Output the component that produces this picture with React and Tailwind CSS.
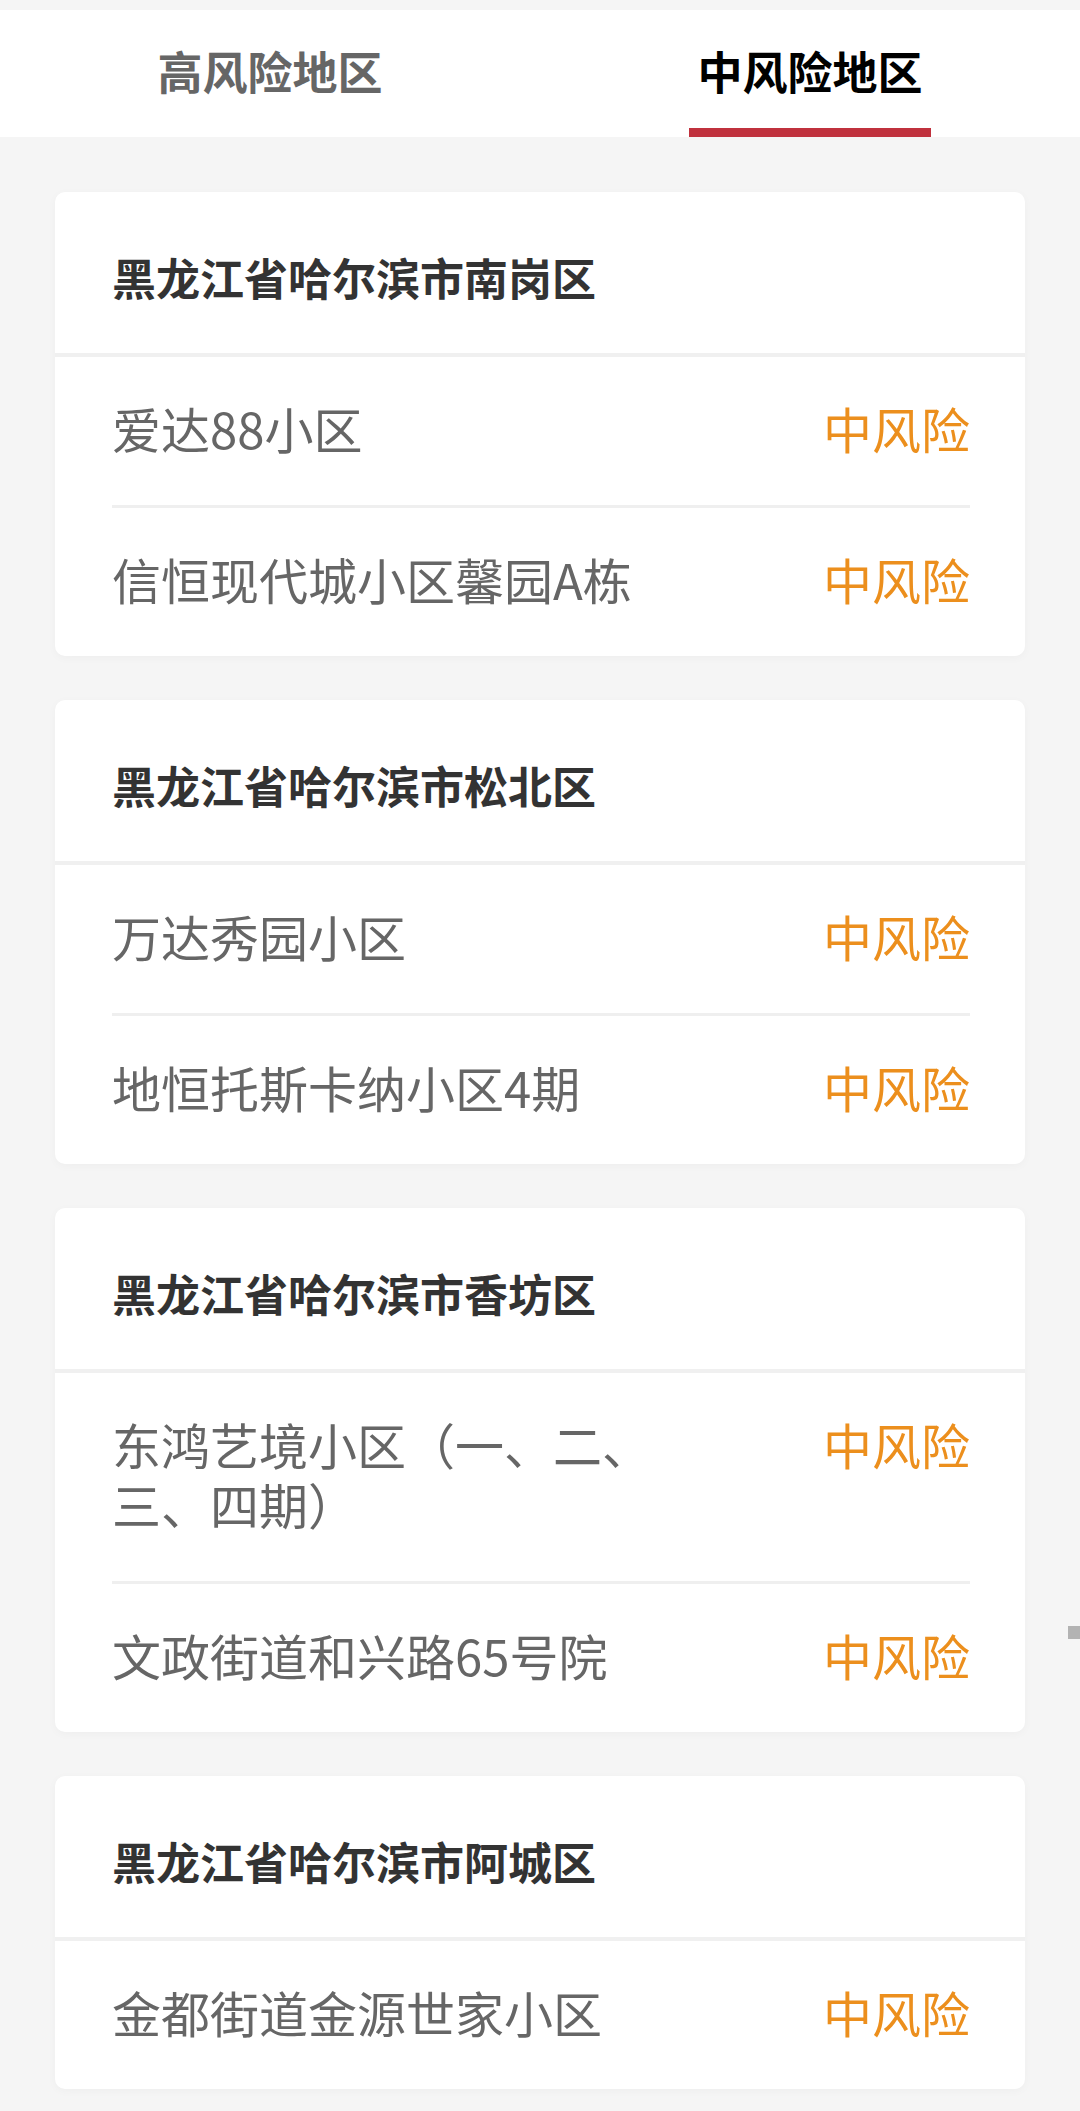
import React from "react";

const cards = [
  {
    title: "黑龙江省哈尔滨市南岗区",
    rows: ["爱达88小区", "信恒现代城小区馨园A栋"],
  },
  {
    title: "黑龙江省哈尔滨市松北区",
    rows: ["万达秀园小区", "地恒托斯卡纳小区4期"],
  },
  {
    title: "黑龙江省哈尔滨市香坊区",
    rows: ["东鸿艺境小区（一、二、三、四期）", "文政街道和兴路65号院"],
  },
  {
    title: "黑龙江省哈尔滨市阿城区",
    rows: ["金都街道金源世家小区"],
  },
];

const font = { fontFamily: '"Noto Sans CJK SC", "Noto Sans", sans-serif' };

export default function App() {
  return (
    <div className="relative min-h-[2111px] bg-[#f5f5f5] pt-[10px]" style={font}>
      <div className="flex h-[127px] bg-white">
        <div className="flex flex-1 items-center justify-center pb-[5px]">
          <span className="text-[45px] font-bold leading-[60px] text-[#666666]">高风险地区</span>
        </div>
        <div className="relative flex flex-1 items-center justify-center pb-[5px]">
          <span className="text-[45px] font-bold leading-[60px] text-black">中风险地区</span>
          <div className="absolute bottom-0 left-1/2 h-[9px] w-[242px] -translate-x-1/2 bg-[#c0313d]" />
        </div>
      </div>

      <div className="flex flex-col gap-[44px] px-[55px] pt-[55px]">
        {cards.map((card) => (
          <div
            key={card.title}
            className="overflow-hidden rounded-[10px] bg-white shadow-[0_2px_10px_rgba(0,0,0,0.03)]"
          >
            <div className="px-[57px] pb-[46px] pt-[55px] text-[44px] font-bold leading-[60px] text-[#333333]">
              {card.title}
            </div>
            <div className="h-[4px] bg-[#f0f0f0]" />
            <div className="pl-[57px] pr-[55px]">
              {card.rows.map((row, i) => (
                <div
                  key={row}
                  className={`flex items-start justify-between pb-[47px] pt-[41px] text-[49px] leading-[60px] ${
                    i > 0 ? "border-t-[3px] border-[#efefef]" : ""
                  }`}
                >
                  <span className="w-[560px] text-[#666666]">{row}</span>
                  <span className="text-[#ec8f1d]">中风险</span>
                </div>
              ))}
            </div>
          </div>
        ))}
      </div>

      <div className="absolute left-[1068px] top-[1626px] h-[13px] w-[12px] bg-[#b3b3b3]" />
    </div>
  );
}
